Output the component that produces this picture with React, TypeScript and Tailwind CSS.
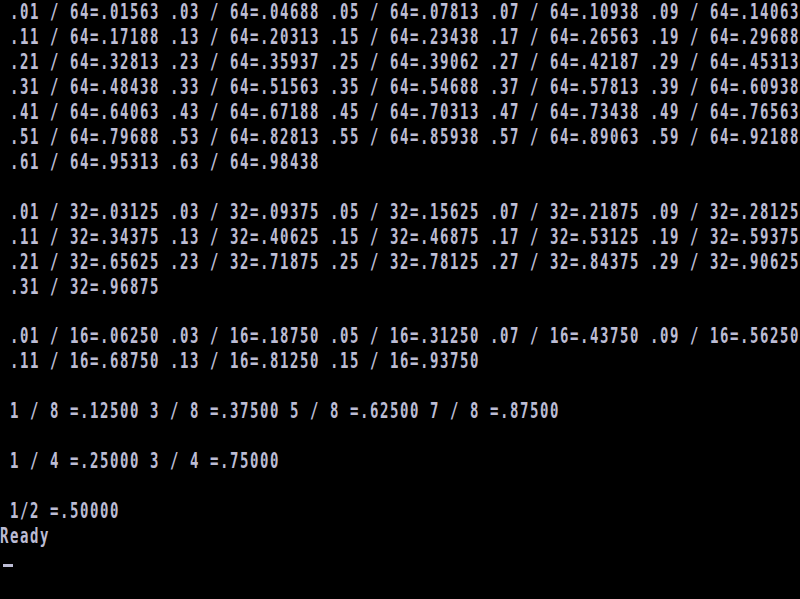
const lines: string[] = [
  " .01 / 64=.01563 .03 / 64=.04688 .05 / 64=.07813 .07 / 64=.10938 .09 / 64=.14063",
  " .11 / 64=.17188 .13 / 64=.20313 .15 / 64=.23438 .17 / 64=.26563 .19 / 64=.29688",
  " .21 / 64=.32813 .23 / 64=.35937 .25 / 64=.39062 .27 / 64=.42187 .29 / 64=.45313",
  " .31 / 64=.48438 .33 / 64=.51563 .35 / 64=.54688 .37 / 64=.57813 .39 / 64=.60938",
  " .41 / 64=.64063 .43 / 64=.67188 .45 / 64=.70313 .47 / 64=.73438 .49 / 64=.76563",
  " .51 / 64=.79688 .53 / 64=.82813 .55 / 64=.85938 .57 / 64=.89063 .59 / 64=.92188",
  " .61 / 64=.95313 .63 / 64=.98438",
  "",
  " .01 / 32=.03125 .03 / 32=.09375 .05 / 32=.15625 .07 / 32=.21875 .09 / 32=.28125",
  " .11 / 32=.34375 .13 / 32=.40625 .15 / 32=.46875 .17 / 32=.53125 .19 / 32=.59375",
  " .21 / 32=.65625 .23 / 32=.71875 .25 / 32=.78125 .27 / 32=.84375 .29 / 32=.90625",
  " .31 / 32=.96875",
  "",
  " .01 / 16=.06250 .03 / 16=.18750 .05 / 16=.31250 .07 / 16=.43750 .09 / 16=.56250",
  " .11 / 16=.68750 .13 / 16=.81250 .15 / 16=.93750",
  "",
  " 1 / 8 =.12500 3 / 8 =.37500 5 / 8 =.62500 7 / 8 =.87500",
  "",
  " 1 / 4 =.25000 3 / 4 =.75000",
  "",
  " 1/2 =.50000",
  "Ready",
];

const Row = ({ text }: { text: string }) => (
  <div className="min-h-0 overflow-visible text-[16px] leading-[20px]">
    <span className="inline-block origin-top scale-y-[1.5] whitespace-pre text-[14px] leading-[2px] tracking-[1.57px] font-bold text-[#bcbcd4] [font-family:'DejaVu_Sans_Mono',monospace]">
      {text}
    </span>
  </div>
);

export default function App() {
  return (
    <div className="w-[800px] h-[599px] bg-black overflow-hidden grid grid-rows-[repeat(24,minmax(0,1fr))]">
      {lines.map((l, i) => (
        <Row key={i} text={l} />
      ))}
      {/* cursor */}
      <div className="min-h-0 flex flex-col justify-end pb-[7px] pl-[3px]">
        <div className="w-[10px] h-[3px] bg-[#bcbcd4]" />
      </div>
    </div>
  );
}
